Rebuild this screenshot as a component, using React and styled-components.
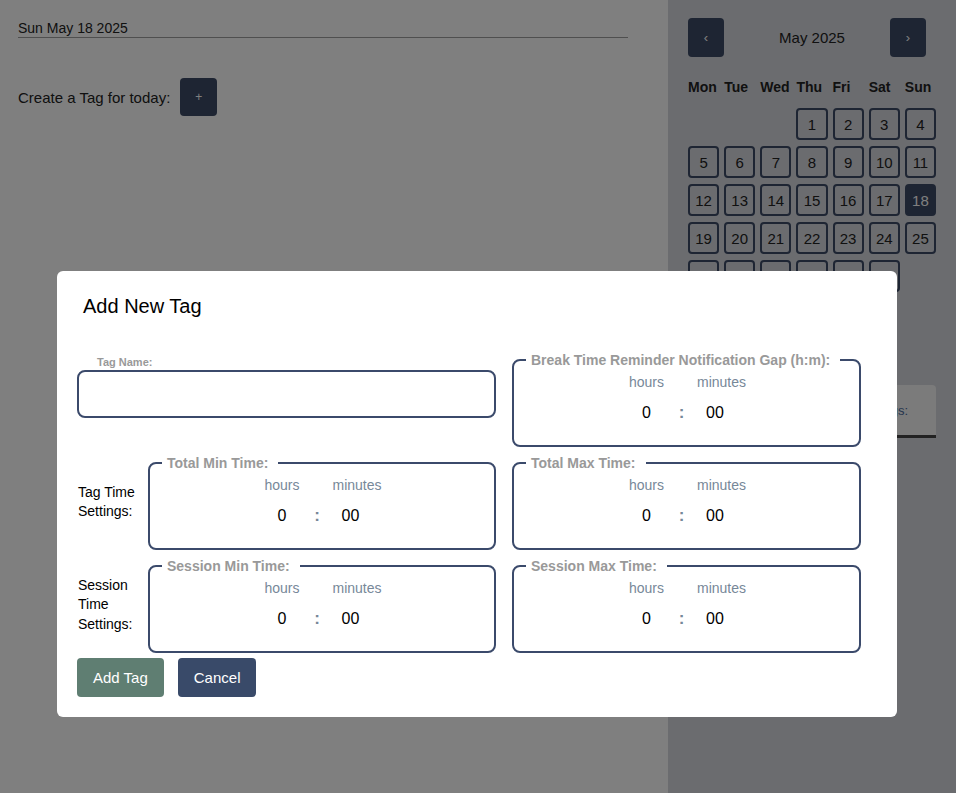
import React from "react";
import styled, { createGlobalStyle } from "styled-components";

const GlobalStyle = createGlobalStyle`
  body {
    margin: 0;
    font-family: "Liberation Sans", Arial, sans-serif;
    color: #222;
  }
  * {
    box-sizing: border-box;
  }
`;

const WEEKDAYS = ["Mon", "Tue", "Wed", "Thu", "Fri", "Sat", "Sun"];
const LEAD_BLANKS = 3;
const DAYS = Array.from({ length: 31 }, (_, i) => i + 1);
const TODAY = 18;

const TimePicker = ({ hours = "0", minutes = "00" }) => (
  <TimeGrid>
    <UnitLabel>hours</UnitLabel>
    <span />
    <UnitLabel>minutes</UnitLabel>
    <TimeInput value={hours} readOnly width={53} />
    <Colon>:</Colon>
    <TimeInput value={minutes} readOnly width={47} $start />
  </TimeGrid>
);

const TimeField = ({ legend }) => (
  <Field>
    <Legend>{legend}</Legend>
    <TimePicker />
  </Field>
);

const App = () => {
  return (
    <>
      <GlobalStyle />
      <Page>
        <Main>
          <DateHeading>Sun May 18 2025</DateHeading>
          <CreateRow>
            <span>Create a Tag for today:</span>
            <SmallButton>+</SmallButton>
          </CreateRow>
        </Main>

        <Sidebar>
          <CalHeader>
            <NavButton>‹</NavButton>
            <MonthTitle>May 2025</MonthTitle>
            <NavButton $right>›</NavButton>
          </CalHeader>
          <WeekRow>
            {WEEKDAYS.map((d) => (
              <WeekDay key={d}>{d}</WeekDay>
            ))}
          </WeekRow>
          <DayGrid>
            {Array.from({ length: LEAD_BLANKS }).map((_, i) => (
              <span key={"b" + i} />
            ))}
            {DAYS.map((d) => (
              <DayCell key={d} $active={d === TODAY}>
                {d}
              </DayCell>
            ))}
          </DayGrid>
          <TabBox>
            <TabText>Tags:</TabText>
          </TabBox>
        </Sidebar>
      </Page>

      <Overlay>
        <Modal>
          <ModalTitle>Add New Tag</ModalTitle>
          <FormGrid>
            <NameBlock>
              <SmallLabel>Tag Name:</SmallLabel>
              <NameInput type="text" />
            </NameBlock>
            <TimeField legend="Break Time Reminder Notification Gap (h:m):" />

            <SettingRow>
              <SideLabel>Tag Time Settings:</SideLabel>
              <TimeField legend="Total Min Time:" />
            </SettingRow>
            <TimeField legend="Total Max Time:" />

            <SettingRow>
              <SideLabel>Session Time Settings:</SideLabel>
              <TimeField legend="Session Min Time:" />
            </SettingRow>
            <TimeField legend="Session Max Time:" />
          </FormGrid>
          <ButtonRow>
            <ActionButton $bg="#5f7e72">Add Tag</ActionButton>
            <ActionButton $bg="#394a69">Cancel</ActionButton>
          </ButtonRow>
        </Modal>
      </Overlay>
    </>
  );
};

const Page = styled.div`
  display: flex;
  min-height: 100vh;
  background: #fff;
`;

const Main = styled.div`
  width: 668px;
  padding: 19px 40px 0 18px;
`;

const DateHeading = styled.div`
  font-size: 14px;
  line-height: 18px;
  border-bottom: 1px solid #9e9e9e;
`;

const CreateRow = styled.div`
  display: flex;
  align-items: center;
  gap: 10px;
  margin-top: 40px;
  font-size: 15px;
  line-height: 20px;

  & > span {
    padding-top: 2px;
  }
`;

const SmallButton = styled.button`
  width: 37px;
  height: 38px;
  border: none;
  border-radius: 4px;
  background: #3c4a66;
  color: #fff;
  font-family: inherit;
  font-size: 12px;
`;

const Sidebar = styled.div`
  width: 288px;
  background: #d7d9df;
  padding: 18px 20px;
`;

const CalHeader = styled.div`
  display: grid;
  grid-template-columns: 1fr auto 1fr;
  align-items: center;
`;

const NavButton = styled.button`
  width: 36px;
  height: 39px;
  border: none;
  border-radius: 4px;
  background: #3c4a66;
  color: #fff;
  font-family: inherit;
  font-size: 13px;
  justify-self: ${(p) => (p.$right ? "end" : "start")};
  margin-right: ${(p) => (p.$right ? "10px" : "0")};
`;

const MonthTitle = styled.div`
  font-size: 15px;
`;

const WeekRow = styled.div`
  display: grid;
  grid-template-columns: repeat(7, 1fr);
  column-gap: 5px;
  margin-top: 21px;
`;

const WeekDay = styled.div`
  font-size: 14px;
  font-weight: bold;
  line-height: 18px;
`;

const DayGrid = styled.div`
  display: grid;
  grid-template-columns: repeat(7, 1fr);
  grid-auto-rows: 32px;
  column-gap: 5px;
  row-gap: 6px;
  margin-top: 12px;
`;

const DayCell = styled.div`
  display: flex;
  align-items: center;
  justify-content: center;
  border: 2px solid #3c4a66;
  border-radius: 4px;
  font-size: 15px;
  background: ${(p) => (p.$active ? "#3c4a66" : "transparent")};
  color: ${(p) => (p.$active ? "#fff" : "#222")};
`;

const TabBox = styled.div`
  margin-top: 93px;
  height: 53px;
  background: #f6f6f6;
  border-bottom: 3px solid #444;
  border-radius: 0 4px 0 0;
  display: flex;
  align-items: center;
  justify-content: flex-end;
  padding-right: 28px;
`;

const TabText = styled.span`
  font-size: 13px;
  color: #4a6a9a;
`;

const Overlay = styled.div`
  position: fixed;
  inset: 0;
  background: rgba(0, 0, 0, 0.5);
  display: flex;
  justify-content: flex-start;
  align-items: flex-start;
  padding: 271px 0 0 57px;
`;

const Modal = styled.div`
  width: 840px;
  background: #fff;
  border-radius: 6px;
  padding: 20px;
`;

const ModalTitle = styled.h2`
  margin: 0 0 30px;
  padding-left: 6px;
  font-size: 20px;
  font-weight: normal;
  line-height: 30px;
  color: #000;
`;

const FormGrid = styled.div`
  display: grid;
  grid-template-columns: 419px 349px;
  column-gap: 16px;
  row-gap: 7px;
`;

const NameBlock = styled.div`
  padding-top: 4px;
`;

const SmallLabel = styled.label`
  display: block;
  padding-left: 20px;
  font-size: 11px;
  font-weight: bold;
  line-height: 14px;
  color: #999;
`;

const NameInput = styled.input`
  display: block;
  width: 100%;
  height: 48px;
  margin-top: 1px;
  border: 2px solid #3b4a6b;
  border-radius: 8px;
  outline: none;
`;

const SettingRow = styled.div`
  display: flex;
  align-items: center;
  gap: 9px;
`;

const SideLabel = styled.div`
  width: 62px;
  flex-shrink: 0;
  padding-left: 1px;
  font-size: 14px;
  line-height: 19.5px;
  color: #000;
`;

const Field = styled.fieldset`
  flex: 1;
  margin: 0;
  min-width: 0;
  border: 2px solid #3b4a6b;
  border-radius: 8px;
  padding: 4px 12px 20px;
`;

const Legend = styled.legend`
  padding: 0 10px 0 5px;
  white-space: nowrap;
  font-size: 14px;
  font-weight: bold;
  line-height: 18px;
  color: #999;
`;

const TimeGrid = styled.div`
  display: grid;
  grid-template-columns: 50px 20px 60px;
  grid-template-rows: 18px 24px;
  row-gap: 10px;
  justify-content: center;
  align-items: center;
`;

const UnitLabel = styled.span`
  font-size: 14px;
  text-align: center;
  color: #778899;
`;

const TimeInput = styled.input.attrs({ type: "text" })`
  width: ${(p) => p.width}px;
  justify-self: ${(p) => (p.$start ? "start" : "center")};
  border: none;
  outline: none;
  padding: 0;
  text-align: center;
  font-family: inherit;
  font-size: 16px;
  color: #000;
  background: transparent;
`;

const Colon = styled.span`
  text-align: center;
  font-size: 17px;
  font-weight: bold;
  color: #778899;
`;

const ButtonRow = styled.div`
  display: flex;
  gap: 14px;
  margin-top: 5px;
`;

const ActionButton = styled.button`
  height: 39px;
  padding: 0 16px;
  border: none;
  border-radius: 4px;
  background: ${(p) => p.$bg};
  color: #fff;
  font-family: inherit;
  font-size: 15px;
`;

export default App;
